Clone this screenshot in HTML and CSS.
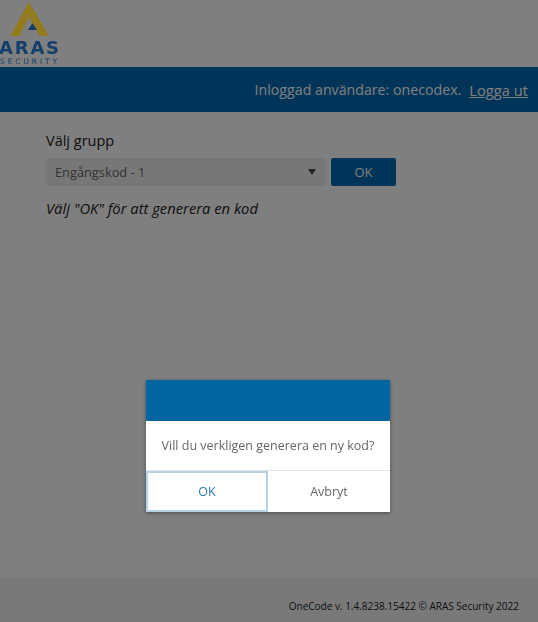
FILE: index.html
```
<!DOCTYPE html>
<html lang="sv">
<head>
<meta charset="utf-8">
<title>OneCode</title>
<link rel="stylesheet" href="styles.css">
</head>
<body>
<div class="page">
  <header class="brand">
    <div class="logo">
      <svg class="logo-mark" width="60" height="36" viewBox="0 0 60 36">
        <path class="gold" d="M29 2 L49 36 H39.500 L29 17 L19.500 36 H10 Z"/>
        <path class="blue" d="M32.500 23 L37 30 H28 Z"/>
      </svg>
      <div class="logo-name">ARAS</div>
      <div class="logo-sub">SECURITY</div>
    </div>
  </header>
  <nav class="nav">
    <span>Inloggad användare: onecodex.</span>
    <a href="#" class="logout">Logga ut</a>
  </nav>
  <main class="main">
    <label class="label">Välj grupp</label>
    <div class="row">
      <div class="select"><span>Engångskod - 1</span><i class="caret"></i></div>
      <button class="btn">OK</button>
    </div>
    <p class="hint">Välj "OK" för att generera en kod</p>
  </main>
  <footer class="footer">OneCode v. 1.4.8238.15422 © ARAS Security 2022</footer>
</div>
<div class="overlay">
  <div class="dialog">
    <div class="dialog-head"></div>
    <div class="dialog-body">Vill du verkligen generera en ny kod?</div>
    <div class="dialog-actions">
      <button class="action action-ok">OK</button>
      <button class="action">Avbryt</button>
    </div>
  </div>
</div>
</body>
</html>
```
FILE: styles.css
```
* { box-sizing: border-box; }
html, body { margin: 0; height: 100%; }
body {
  font-family: "Open Sans", "Noto Sans", sans-serif;
  color: #333;
  background: #fff;
  overflow: hidden;
}
.page { height: 622px; display: flex; flex-direction: column; }
.brand { height: 67px; flex: none; overflow: hidden; }
.logo { width: 60px; position: relative; z-index: 2; }
.logo-mark { display: block; }
.gold { fill: #947a1e; }
.blue { fill: #123f6c; }
.logo-name {
  font-family: "DejaVu Sans", sans-serif;
  font-weight: 700;
  font-size: 18px;
  line-height: 14px;
  letter-spacing: 1.800px;
  color: #123f6c;
  margin: 5px 0 0 -1px;
}
.logo-sub {
  font-family: "DejaVu Sans", sans-serif;
  font-size: 7.500px;
  line-height: 7px;
  letter-spacing: 2.900px;
  color: #123f6c;
  margin-top: 3px;
  white-space: nowrap;
}
.nav {
  height: 45px;
  flex: none;
  background: #0068b0;
  color: #fff;
  font-size: 14.200px;
  display: flex;
  align-items: center;
  justify-content: flex-end;
  gap: 8px;
  padding-right: 10px;
}
.logout { color: #fff; text-decoration: underline; font-size: 14.700px; }
.main { flex: 1; padding: 18px 46px 0; }
.label { display: block; font-size: 14.500px; line-height: 22px; color: #222; }
.row { display: flex; gap: 5px; margin-top: 6px; width: 350px; }
.select {
  flex: 1;
  height: 28px;
  background: #efefef;
  border-radius: 2px;
  font-size: 12.800px;
  color: #666;
  display: flex;
  align-items: center;
  justify-content: space-between;
  padding: 0 9px;
}
.caret {
  width: 0; height: 0;
  border-left: 4px solid transparent;
  border-right: 4px solid transparent;
  border-top: 6px solid #444;
  margin-right: 1px;
}
.btn {
  width: 65px;
  height: 28px;
  border: 0;
  border-radius: 2px;
  background: #0068b0;
  color: #fff;
  font: inherit;
  font-size: 13px;
}
.hint { margin: 12px 0 0; font-size: 14.750px; line-height: 20px; font-style: italic; color: #222; }
.footer {
  height: 44px;
  flex: none;
  background: #f3f3f3;
  font-size: 10px;
  color: #222;
  display: flex;
  align-items: flex-end;
  justify-content: flex-end;
  padding: 0 19px 9px 0;
}
.overlay {
  position: fixed;
  inset: 0;
  background: rgba(0, 0, 0, .5);
}
.dialog {
  position: absolute;
  left: 146px;
  top: 380px;
  width: 244px;
  background: #fff;
  box-shadow: 0 1px 4px rgba(0, 0, 0, .4);
}
.dialog-head { height: 41px; background: #0066a1; }
.dialog-body {
  height: 49px;
  font-size: 12.500px;
  color: #666;
  display: flex;
  align-items: center;
  justify-content: center;
}
.dialog-actions { display: flex; height: 42px; border-top: 1px solid #e5e5e5; }
.action {
  flex: 1;
  border: 0;
  background: #fff;
  font: inherit;
  font-size: 12.500px;
  color: #666;
}
.action-ok {
  flex: none;
  width: 122px;
  color: #2a78ae;
  border: 2px solid #b5d3e6;
}
```
